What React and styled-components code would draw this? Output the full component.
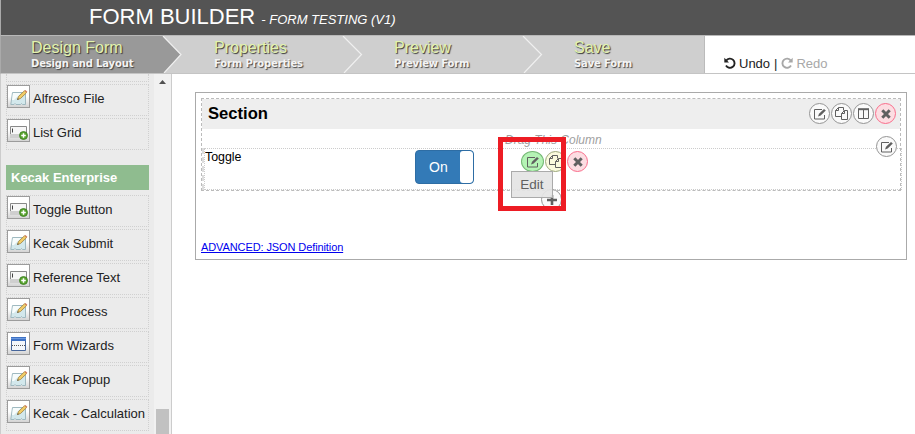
import React from "react";
import styled, { createGlobalStyle, css } from "styled-components";

const Global = createGlobalStyle`
  * { box-sizing: border-box; }
  html, body { margin: 0; height: 434px; overflow: hidden; background: #fff; }
  body { font-family: "Liberation Sans", Arial, sans-serif; color: #000; }
`;

const Page = styled.div`
  width: 915px;
  height: 434px;
  display: flex;
  flex-direction: column;
  overflow: hidden;
`;
const Header = styled.header`
  height: 36px;
  background: #545454;
  border-left: 1px solid #aaa;
  border-bottom: 1px solid #b8b8b8;
  color: #fff;
  padding: 4px 0 0 88px;
  line-height: 25px;
  white-space: nowrap;
`;
const Title = styled.span`font-size: 22px;`;
const Subtitle = styled.span`
  font-size: 13px;
  font-style: italic;
  margin-left: 6px;
`;
const Nav = styled.nav`
  height: 38px;
  display: flex;
  border-bottom: 1px solid #c4c4c4;
  border-left: 1px solid #aaa;
`;
const Steps = styled.div`
  width: 704px;
  display: flex;
  background: #cfcfcf;
  border-right: 1px solid #bbb;
`;
const Step = styled.div`
  position: relative;
  flex: 0 0 ${(p) => (p.$first ? 183 : 180)}px;
  padding: 2px 0 0 30px;
`;
const StepArt = styled.svg`
  position: absolute;
  left: 0;
  top: 0;
`;
const StepTitle = styled.div`
  position: relative;
  color: #e3f3ad;
  font-size: 16px;
  line-height: 19px;
  text-shadow: 1px 1px 1px #333;
`;
const StepNote = styled.div`
  position: relative;
  color: #f4f4f4;
  font: bold 10px/14px "DejaVu Sans", sans-serif;
  letter-spacing: -0.15px;
  text-shadow: 1px 1px 1px #444;
  white-space: nowrap;
`;
const History = styled.div`
  display: flex;
  align-items: center;
  height: 16px;
  margin: 19px 0 0 19px;
  font-size: 13px;
  color: #222;
  svg { margin-right: 3px; }
`;
const Redo = styled.span`
  display: flex;
  align-items: center;
  color: #a8a8a8;
  margin-left: 4px;
`;
const Undo = styled.span`
  display: flex;
  align-items: center;
  margin-right: 4px;
`;
const Body = styled.div`
  display: flex;
  height: 360px;
`;
const Sidebar = styled.aside`
  width: 172px;
  display: flex;
  background: #ebebeb;
  border-left: 1px solid #ccc;
  border-right: 1px solid #ccc;
`;
const Palette = styled.div`
  width: 153px;
  height: 360px;
  padding: 0 5px;
  overflow: hidden;
`;
const PrevEdge = styled.div`
  height: 8px;
  width: 143px;
  border: 1px dotted #d0d0d0;
  border-top: 0;
  margin-bottom: 2px;
`;
const Item = styled.div`
  width: 143px;
  height: 32px;
  display: flex;
  align-items: flex-start;
  border: 1px dotted #d0d0d0;
  margin-bottom: 2px;
  font-size: 13px;
  color: #222;
  white-space: nowrap;
`;
const IconFrame = styled.span`
  width: 23px;
  height: 23px;
  flex: none;
  border: 1px solid #9c9c9c;
  background: linear-gradient(#fff 50%, #d4d4d4);
  svg { display: block; }
`;
const ItemLabel = styled.span`
  margin-left: 3px;
  line-height: 28px;
`;
const GroupTitle = styled.div`
  width: 143px;
  height: 25px;
  margin: 15px 0 5px;
  padding-left: 5px;
  background: #8fbc8f;
  color: #fff;
  font-size: 13px;
  font-weight: bold;
  line-height: 25px;
`;
const Scrollbar = styled.div`
  width: 17px;
  height: 360px;
  padding: 6px 2px 0;
  background: #f1f1f1;
  display: flex;
  flex-direction: column;
  justify-content: space-between;
  align-items: center;
`;
const Thumb = styled.div`
  width: 13px;
  height: 25px;
  background: #c1c1c1;
`;
const Canvas = styled.main`
  flex: 1;
  padding: 18px 8px 0 23px;
`;
const FormBox = styled.div`
  height: 168px;
  border: 1px solid #aaa;
  padding: 5px;
`;
const Section = styled.section`
  position: relative;
  height: 93px;
  border: 1px dashed #bbb;
  background: #fff;
`;
const SectionHead = styled.div`
  height: 30px;
  padding: 0 4px 0 6px;
  background: #eee;
  display: flex;
  align-items: center;
  justify-content: space-between;
`;
const SectionName = styled.h2`
  margin: 0;
  font-size: 16.6px;
  line-height: 20px;
`;
const Tools = styled.div`
  display: flex;
  gap: 1px;
  padding-bottom: 1px;
`;
const tones = {
  plain: css`border-color: #949494; background: #fafafa;`,
  green: css`border-color: #75b875; background: #b5f3b5;`,
  lime: css`border-color: #9ba77a; background: #fafade;`,
  red: css`border-color: #fa6d8b; background: #fcdde2;`,
};
const RoundButton = styled.button`
  width: ${(p) => p.$w || 21}px;
  height: 21px;
  padding: 0;
  border: 1px solid;
  border-radius: 50%;
  display: flex;
  align-items: center;
  justify-content: center;
  color: #606060;
  ${(p) => tones[p.$tone || "plain"]}
  svg { flex: none; }
`;
const DragNote = styled.div`
  height: 19px;
  padding: 4px 0 0 303px;
  color: #a0a0a0;
  font-size: 12px;
  font-style: italic;
  line-height: 15px;
`;
const ColumnRow = styled.div`
  height: 42px;
  margin-right: -2px;
  border-left: 2px dashed #ddd;
`;
const Column = styled.div`
  position: relative;
  height: 42px;
  border: 1px dotted #ccc;
  display: flex;
  align-items: flex-start;
`;
const FieldLabel = styled.label`
  width: 210px;
  font-size: 12.4px;
  line-height: 17px;
`;
const Switch = styled.div`
  width: 59px;
  height: 34px;
  margin-top: 1px;
  display: flex;
  justify-content: space-between;
  border: 1px solid #2e6da4;
  border-radius: 4px;
  background: #337ab7;
  color: #fff;
  font-size: 14px;
  line-height: 32px;
  overflow: hidden;
  padding-left: 13px;
`;
const Knob = styled.span`
  width: 13px;
  background: #fff;
  border-radius: 3px;
`;
const FieldTools = styled.div`
  position: absolute;
  left: 316px;
  top: 2px;
  display: flex;
  gap: 1px;
`;
const RowEdit = styled.div`
  position: absolute;
  right: 3px;
  top: 37px;
`;
const AddClip = styled.div`
  position: absolute;
  left: 339px;
  top: 90px;
  height: 18px;
  overflow: hidden;
`;
const Tooltip = styled.div`
  position: absolute;
  left: 309px;
  top: 72px;
  width: 42px;
  height: 27px;
  border: 1px solid #aaa;
  background: rgba(228, 228, 228, 0.92);
  color: #606060;
  font-size: 13.5px;
  line-height: 26px;
  text-align: center;
`;
const Highlight = styled.div`
  position: absolute;
  left: 296px;
  top: 38px;
  width: 68px;
  height: 74px;
  border: 5px solid #ed1c24;
`;
const Advanced = styled.a`
  display: inline-block;
  margin-top: 50px;
  color: #0000ee;
  font-size: 11px;
  line-height: 13px;
  letter-spacing: -0.1px;
  text-decoration: underline;
`;

const EditIcon = () => (
  <svg width="14" height="14" viewBox="0 0 14 14" fill="none">
    <path d="M9 2.5H1.5v9.5h10V8" stroke="currentColor" />
    <path d="M5 9.5l1-2.7L11 2l1.8 1.6-5.1 5z" fill="currentColor" />
  </svg>
);
const CopyIcon = () => (
  <svg width="15" height="15" viewBox="0 0 15 15" fill="none" stroke="currentColor">
    <path d="M7 10.5H1.5V4.5l3-3h5v3M4.5 1.5v3h-3" />
    <path d="M7.5 7.5l3-3h3v9h-6zM10.5 4.5v3h-3" />
  </svg>
);
const ColumnsIcon = () => (
  <svg width="13" height="13" viewBox="0 0 13 13" fill="none" stroke="currentColor">
    <path d="M1.5 2v9.5h10V2M6.5 2v9.5" />
    <path d="M1 2.2h11" strokeWidth="2" />
  </svg>
);
const CloseIcon = () => (
  <svg width="12" height="12" viewBox="0 0 12 12" stroke="currentColor" strokeWidth="3">
    <path d="M2.3 2.3l7.4 7.4M9.7 2.3L2.3 9.7" />
  </svg>
);
const PlusIcon = () => (
  <svg width="12" height="12" viewBox="0 0 12 12" stroke="currentColor" strokeWidth="2.6">
    <path d="M6 1v10M1 6h10" />
  </svg>
);
const TurnIcon = ({ flip }) => (
  <svg width="12" height="12" viewBox="0 0 12 12">
    <g transform={flip ? "translate(12 0) scale(-1 1)" : undefined}>
      <path d="M2.2 3.6A4.6 4.6 0 1 1 2 8.6" fill="none" stroke="currentColor" strokeWidth="1.9" />
      <path d="M.3.8v4.7H5z" fill="currentColor" />
    </g>
  </svg>
);
const PenArt = () => (
  <svg width="21" height="21" viewBox="0 -1 21 21">
    <path d="M4.5 5.5h13v12h-3l-1-1-1 1H8l-1-1-1 1H2.8z" fill="#d3e8ec" stroke="#9fb9c0" />
    <path d="M5 6h8l-7 7H4z" fill="#f7fcfc" />
    <path d="M9.5 12.5l1-3 6-5.8 2 2-6 5.8z" fill="#f2cd67" stroke="#a1813f" strokeWidth=".8" />
    <path d="M16.5 3.7l2 2 .8-1-1.8-1.8z" fill="#d57958" />
    <path d="M9.3 12.7l.5-1.5 1 1z" fill="#333" />
  </svg>
);
const FieldArt = () => (
  <svg width="21" height="21" viewBox="0 0 21 21">
    <path d="M2.5 14V6.5h16V14" fill="#f7f7f7" stroke="#888" />
    <path d="M4.5 8.5v4" stroke="#444" />
    <path d="M2 14h17v4H2z" fill="#cfcfcf" />
    <circle cx="15.5" cy="15.5" r="4" fill="#58a32e" stroke="#397b20" strokeWidth=".8" />
    <path d="M15.5 13.2v4.6M13.2 15.5h4.6" stroke="#fff" strokeWidth="1.5" />
  </svg>
);
const WindowArt = () => (
  <svg width="21" height="21" viewBox="0 0 21 21">
    <path d="M3.5 5.5h14v12h-14z" fill="#f3f6fa" stroke="#46669b" />
    <path d="M3 4h15v4H3z" fill="#3e72c4" />
    <path d="M3 5.5h15" stroke="#6c9ae0" />
    <path d="M4 12.5h13" stroke="#555" strokeDasharray="1 1" />
  </svg>
);
const art = { pen: PenArt, field: FieldArt, window: WindowArt };

const PaletteItem = ({ icon, children }) => {
  const Art = art[icon];
  return (
    <Item>
      <IconFrame><Art /></IconFrame>
      <ItemLabel>{children}</ItemLabel>
    </Item>
  );
};

const steps = [
  ["Design Form", "Design and Layout"],
  ["Properties", "Form Properties"],
  ["Preview", "Preview Form"],
  ["Save", "Save Form"],
];
const enterprise = [
  ["field", "Toggle Button"],
  ["pen", "Kecak Submit"],
  ["field", "Reference Text"],
  ["pen", "Run Process"],
  ["window", "Form Wizards"],
  ["pen", "Kecak Popup"],
  ["pen", "Kecak - Calculation"],
];

export default function App() {
  return (
    <Page>
      <Global />
      <Header>
        <Title>FORM BUILDER</Title>
        <Subtitle>- FORM TESTING (V1)</Subtitle>
      </Header>
      <Nav>
        <Steps>
          {steps.map(([title, note], i) => (
            <Step key={title} $first={i === 0}>
              {i < 3 && (
                <StepArt width="184" height="37" viewBox="0 0 184 37">
                  {i === 0 && <path d="M0 0h162l18 18.5L163 37H0z" fill="#999" />}
                  <path
                    d={i === 0 ? "M162 0l18 18.5L163 37" : "M159 0l18.5 18.5L160 37"}
                    fill="none" stroke="#f0f0f0" strokeWidth="1.2"
                  />
                </StepArt>
              )}
              <StepTitle>{title}</StepTitle>
              <StepNote>{note}</StepNote>
            </Step>
          ))}
        </Steps>
        <History>
          <Undo><TurnIcon />Undo</Undo>|<Redo><TurnIcon flip />Redo</Redo>
        </History>
      </Nav>
      <Body>
        <Sidebar>
          <Palette>
            <PrevEdge />
            <PaletteItem icon="pen">Alfresco File</PaletteItem>
            <PaletteItem icon="field">List Grid</PaletteItem>
            <GroupTitle>Kecak Enterprise</GroupTitle>
            {enterprise.map(([icon, label]) => (
              <PaletteItem key={label} icon={icon}>{label}</PaletteItem>
            ))}
          </Palette>
          <Scrollbar>
            <svg width="7" height="4" viewBox="0 0 7 4"><path d="M0 4L3.5 0 7 4z" fill="#505050" /></svg>
            <Thumb />
          </Scrollbar>
        </Sidebar>
        <Canvas>
          <FormBox>
            <Section>
              <SectionHead>
                <SectionName>Section</SectionName>
                <Tools>
                  <RoundButton><EditIcon /></RoundButton>
                  <RoundButton><CopyIcon /></RoundButton>
                  <RoundButton><ColumnsIcon /></RoundButton>
                  <RoundButton $tone="red"><CloseIcon /></RoundButton>
                </Tools>
              </SectionHead>
              <DragNote>Drag This Column</DragNote>
              <ColumnRow>
                <Column>
                  <FieldLabel>Toggle</FieldLabel>
                  <Switch>On<Knob /></Switch>
                  <FieldTools>
                    <RoundButton $tone="green" $w={23}><EditIcon /></RoundButton>
                    <RoundButton $tone="lime"><CopyIcon /></RoundButton>
                    <RoundButton $tone="red"><CloseIcon /></RoundButton>
                  </FieldTools>
                </Column>
              </ColumnRow>
              <RowEdit><RoundButton><EditIcon /></RoundButton></RowEdit>
              <AddClip><RoundButton><PlusIcon /></RoundButton></AddClip>
              <Tooltip>Edit</Tooltip>
              <Highlight />
            </Section>
            <Advanced>ADVANCED: JSON Definition</Advanced>
          </FormBox>
        </Canvas>
      </Body>
    </Page>
  );
}
